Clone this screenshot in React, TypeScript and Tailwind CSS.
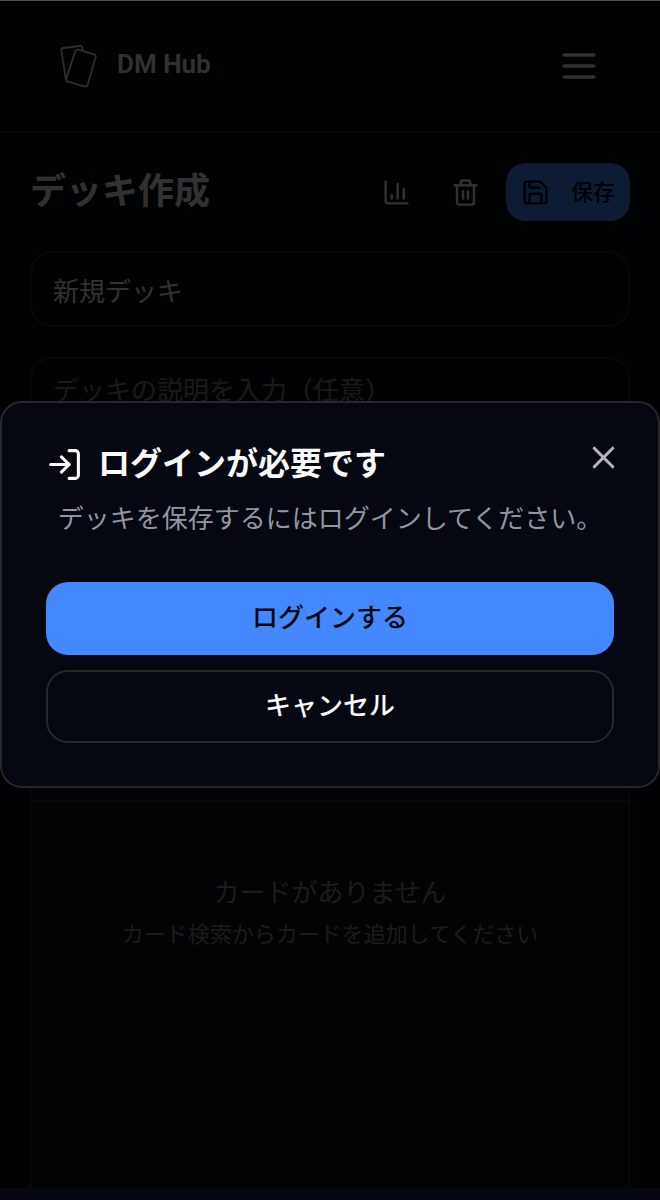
import { ChartColumn, LogIn, Save, Trash2, X } from "lucide-react";

const CardsLogo = () => (
    <svg className="w-[38px] h-11" viewBox="0 0 38 44" fill="none" stroke="#e0dedb" strokeWidth="1.8" strokeLinejoin="round">
        <path d="M7 36.4L2.4 6.4Q2 4.4 4 4L21 2Q23.2 1.8 23.3 3.6L23.6 6" />
        <path d="M19.3 5.7L35.2 10.3Q37.2 11 36.7 13L28.8 40.5Q28 43 25.6 42.4L9 37.6Q6.4 36.8 7.2 34.6L16.2 7.6Q17 5.2 19.3 5.7Z" />
    </svg>
);

const MenuIcon = () => (
    <svg className="w-11 h-11" viewBox="0 0 24 24" fill="none" stroke="currentColor" strokeWidth="2" strokeLinecap="round">
        <path d="M4 6h16M4 12h16M4 18h16" />
    </svg>
);

const Header = () => {
    return (
        <header className="flex items-center justify-between h-[132px] px-[59px] border-b-2 border-[#26272b]">
            <a href="#" className="flex items-center gap-5">
                <CardsLogo />
                <span className="text-[26px] leading-8 font-semibold pb-1">DM Hub</span>
            </a>
            <button type="button" aria-label="メニュー">
                <MenuIcon />
            </button>
        </header>
    );
}

const DeckEditor = () => {
    return (
        <div className="grow flex flex-col px-[30px] pt-[30px]">
            <div className="flex items-center justify-between">
                <h1 className="text-[36px] leading-[58px] font-bold">デッキ作成</h1>
                <div className="flex items-center gap-[11px]">
                    <button type="button" aria-label="統計" className="flex items-center justify-center w-[58px] h-[58px]">
                        <ChartColumn size={29} />
                    </button>
                    <button type="button" aria-label="削除" className="flex items-center justify-center w-[58px] h-[58px]">
                        <Trash2 size={29} />
                    </button>
                    <button type="button" className="flex items-center gap-[21px] h-[58px] px-[15px] rounded-[20px] bg-[#4488ff] text-[#050710] text-[22px] font-medium">
                        <Save size={29} />
                        保存
                    </button>
                </div>
            </div>
            <input
                type="text"
                aria-label="デッキ名"
                defaultValue="新規デッキ"
                className="w-full h-[76px] mt-[30px] px-[21px] rounded-[22px] border-2 border-[#26272b] text-[26px]"
            />
            <textarea
                aria-label="デッキの説明"
                placeholder="デッキの説明を入力（任意）"
                className="w-full h-[148px] mt-[30px] px-[21px] py-[13px] rounded-[22px] border-2 border-[#26272b] text-[26px] leading-[38px] resize-none placeholder:text-[#7c7c82]"
            />
            <section className="grow flex flex-col mt-[30px] border-2 border-b-0 border-[#26272b] bg-[#0c0c14] rounded-t-[22px] text-center text-[#85858c]">
                <div className="h-[265px] border-b-2 border-[#26272b]" />
                <div className="pt-[71px]">
                    <p className="text-[26px] leading-[40px]">カードがありません</p>
                    <p className="mt-[3px] text-[22px] leading-[38px]">カード検索からカードを追加してください</p>
                </div>
            </section>
        </div>
    );
}

const LoginDialog = () => {
    return (
        <div className="absolute inset-0 flex flex-col justify-center bg-black/80">
            <div role="dialog" aria-modal="true" aria-labelledby="login-title" className="relative w-full px-11 pt-[38px] pb-[43px] rounded-[22px] border-2 border-[#26282e] bg-[#050810]">
                <h2 id="login-title" className="flex items-center gap-[15px] text-[32px] leading-[46px] font-semibold text-[#fafafa]">
                    <LogIn size={37} />
                    ログインが必要です
                </h2>
                <p className="mt-[13px] text-center text-[26px] leading-[38px] whitespace-nowrap text-[#9495a0]">デッキを保存するにはログインしてください。</p>
                <div className="flex flex-col gap-[15px] mt-11">
                    <button type="button" className="h-[73px] rounded-[22px] bg-[#4488ff] text-[#050810] text-[26px] font-medium">ログインする</button>
                    <button type="button" className="h-[73px] rounded-[22px] border-2 border-[#26282e] text-[#fafafa] text-[26px] font-medium">キャンセル</button>
                </div>
                <button type="button" aria-label="閉じる" className="absolute top-9 right-9 text-[#b4b5b8]">
                    <X size={37} />
                </button>
            </div>
        </div>
    );
}

const App = () => {
    return (
        <div lang="ja" className="flex flex-col min-h-screen bg-[#040610] font-[Roboto,'Noto_Sans_CJK_JP',sans-serif] text-[#f4f4f5]">
            <main className="relative grow flex flex-col mb-3 border-t border-[#4b4c4f] bg-[#04060c]">
                <Header />
                <DeckEditor />
                <LoginDialog />
            </main>
        </div>
    );
}

export default App;
